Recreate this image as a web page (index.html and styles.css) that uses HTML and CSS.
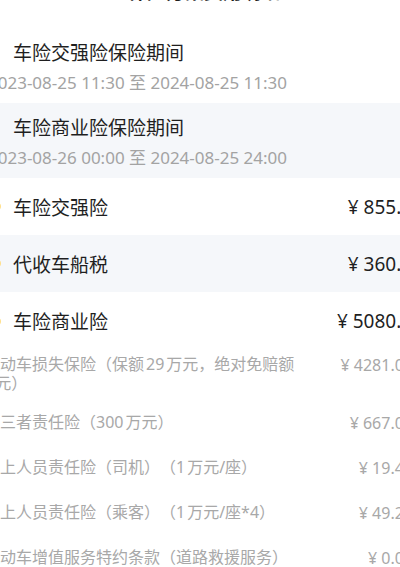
FILE: index.html
```html
<!DOCTYPE html>
<html lang="zh-CN">

<head>
    <meta charset="UTF-8">
    <meta name="viewport" content="width=device-width, initial-scale=1.0">
    <title>保险方案费用明细</title>
    <link rel="stylesheet" href="styles.css">
</head>

<body>

    <div class="sheet">
        <h2 class="sheet-title">保险方案费用明细</h2>

        <!-- 保险期间 -->
        <div class="period">
            <div class="period-name">车险交强险保险期间</div>
            <div class="period-date">2023-08-25 11:30 至 2024-08-25 11:30</div>
        </div>
        <div class="period period-alt">
            <div class="period-name">车险商业险保险期间</div>
            <div class="period-date">2023-08-26 00:00 至 2024-08-25 24:00</div>
        </div>

        <!-- 费用 -->
        <div class="fee-row">
            <div class="fee-name"><span class="dot"></span>车险交强险</div>
            <div class="fee-price">¥ 855.00</div>
        </div>
        <div class="fee-row fee-row-alt">
            <div class="fee-name"><span class="dot"></span>代收车船税</div>
            <div class="fee-price">¥ 360.00</div>
        </div>
        <div class="fee-row">
            <div class="fee-name"><span class="dot"></span>车险商业险</div>
            <div class="fee-price">¥ 5080.46</div>
        </div>

        <div class="sub-list">
            <div class="sub-row">
                <div class="sub-name">机动车损失保险（保额29万元，绝对免赔额0元）</div>
                <div class="sub-price">¥ 4281.02</div>
            </div>
            <div class="sub-row">
                <div class="sub-name">第三者责任险（300万元）</div>
                <div class="sub-price">¥ 667.00</div>
            </div>
            <div class="sub-row">
                <div class="sub-name">车上人员责任险（司机）（1万元/座）</div>
                <div class="sub-price">¥ 19.40</div>
            </div>
            <div class="sub-row">
                <div class="sub-name">车上人员责任险（乘客）（1万元/座*4）</div>
                <div class="sub-price">¥ 49.20</div>
            </div>
            <div class="sub-row">
                <div class="sub-name">机动车增值服务特约条款（道路救援服务）（5次）</div>
                <div class="sub-price">¥ 0.00</div>
            </div>
        </div>
    </div>

</body>

</html>
```

FILE: styles.css
```css
/* 页面基础 */
body {
    margin: 0;
    overflow: hidden;
    background: #fff;
    font-family: "Noto Sans", "Noto Sans CJK SC", sans-serif;
    color: #1f1f1f;
    text-spacing-trim: space-all;
    text-autospace: normal;
}

.sheet {
    margin-left: -16px;
    width: 440px;
}

.sheet-title {
    margin: -17px 0 0;
    height: 45px;
    font-size: 19px;
    line-height: 19px;
    font-weight: bold;
    text-align: center;
}

/* 保险期间 */
.period {
    height: 75px;
    padding-top: 13px;
    box-sizing: border-box;
}

.period-alt,
.fee-row-alt {
    background: #f5f7fa;
}

.period-name {
    padding-left: 29px;
    font-size: 19px;
    line-height: 24px;
}

.period-date {
    margin-top: 6px;
    padding-left: 4px;
    font-size: 17px;
    line-height: 24px;
    color: #a3a3a3;
}

/* 费用 */
.fee-row {
    display: flex;
    justify-content: space-between;
    align-items: center;
    height: 57px;
    font-size: 19px;
}

.fee-row:nth-of-type(5) {
    height: 58px;
}

.fee-name {
    display: flex;
    align-items: center;
}

.dot {
    width: 7px;
    height: 7px;
    margin: 0 12px 0 10px;
    border-radius: 50%;
    background: #ffe08a;
}

.fee-price {
    padding-right: 1px;
}

.sub-list {
    display: flex;
    flex-direction: column;
    gap: 15px;
}

.sub-row {
    display: flex;
    justify-content: space-between;
    align-items: flex-start;
    font-size: 16px;
    color: #a8a8a8;
}

.sub-name {
    width: 321px;
    margin-top: 5px;
    line-height: 19.2px;
}

.sub-price {
    padding-right: 11px;
    line-height: 30px;
}
```
